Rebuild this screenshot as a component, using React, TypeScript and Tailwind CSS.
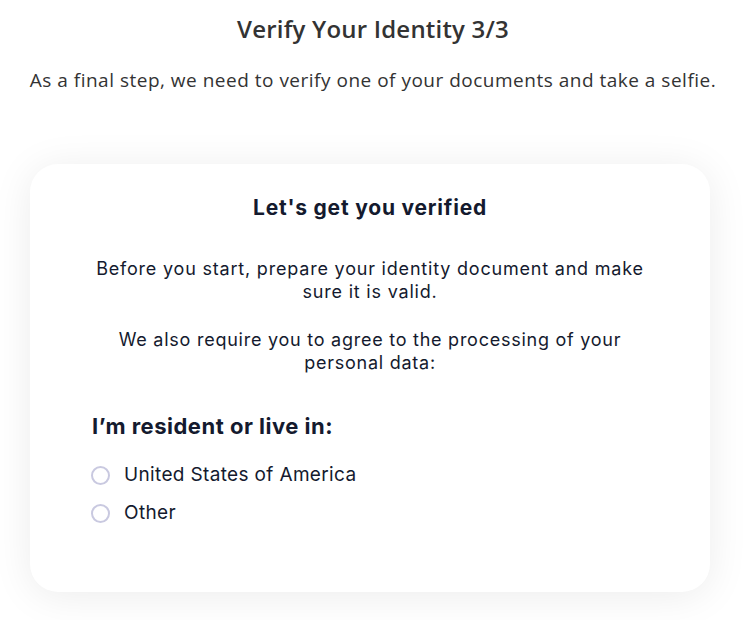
export default function App() {
  const options = ["United States of America", "Other"];

  return (
    <div className="min-h-[620px] bg-white font-['Open_Sans',sans-serif]">
      <div className="flex flex-col items-center pt-[13px]">
        <h1 className="text-[24px] font-semibold leading-8 tracking-[0.2px] text-[#333333]">
          Verify Your Identity 3/3
        </h1>
        <p className="mt-[21px] text-[19px] font-medium leading-7 tracking-[0.5px] text-[#333333]">
          As a final step, we need to verify one of your documents and take a selfie.
        </p>
      </div>

      <div className="ml-[30px] mr-[36px] mt-[70px] h-[428px] rounded-[28px] bg-white px-[62px] pt-[30px] shadow-[0_4px_40px_rgba(0,0,0,0.08)] font-['Inter',sans-serif] text-[#141a2e]">
        <h2 className="text-center text-[21px] font-bold leading-7 tracking-[0.8px]">Let's get you verified</h2>

        <p className="mt-[35px] text-center text-[18px] leading-[23px] tracking-[0.8px]">
          Before you start, prepare your identity document and make
          <br />
          sure it is valid.
        </p>
        <p className="mt-[25px] text-center text-[18px] leading-[23px] tracking-[0.75px]">
          We also require you to agree to the processing of your
          <br />
          personal data:
        </p>

        <h3 className="mt-[38px] text-[22px] font-bold leading-7 tracking-[0.5px]">I’m resident or live in:</h3>

        <div className="mt-[24px] flex flex-col gap-[16px]">
          {options.map((o) => (
            <label key={o} className="-ml-px flex items-center gap-[14px] text-[19px] leading-[22px] tracking-[0.35px]">
              <span className="h-[19px] w-[19px] shrink-0 rounded-full border-2 border-[#c9c9e0] bg-white" />
              {o}
            </label>
          ))}
        </div>
      </div>
    </div>
  );
}
